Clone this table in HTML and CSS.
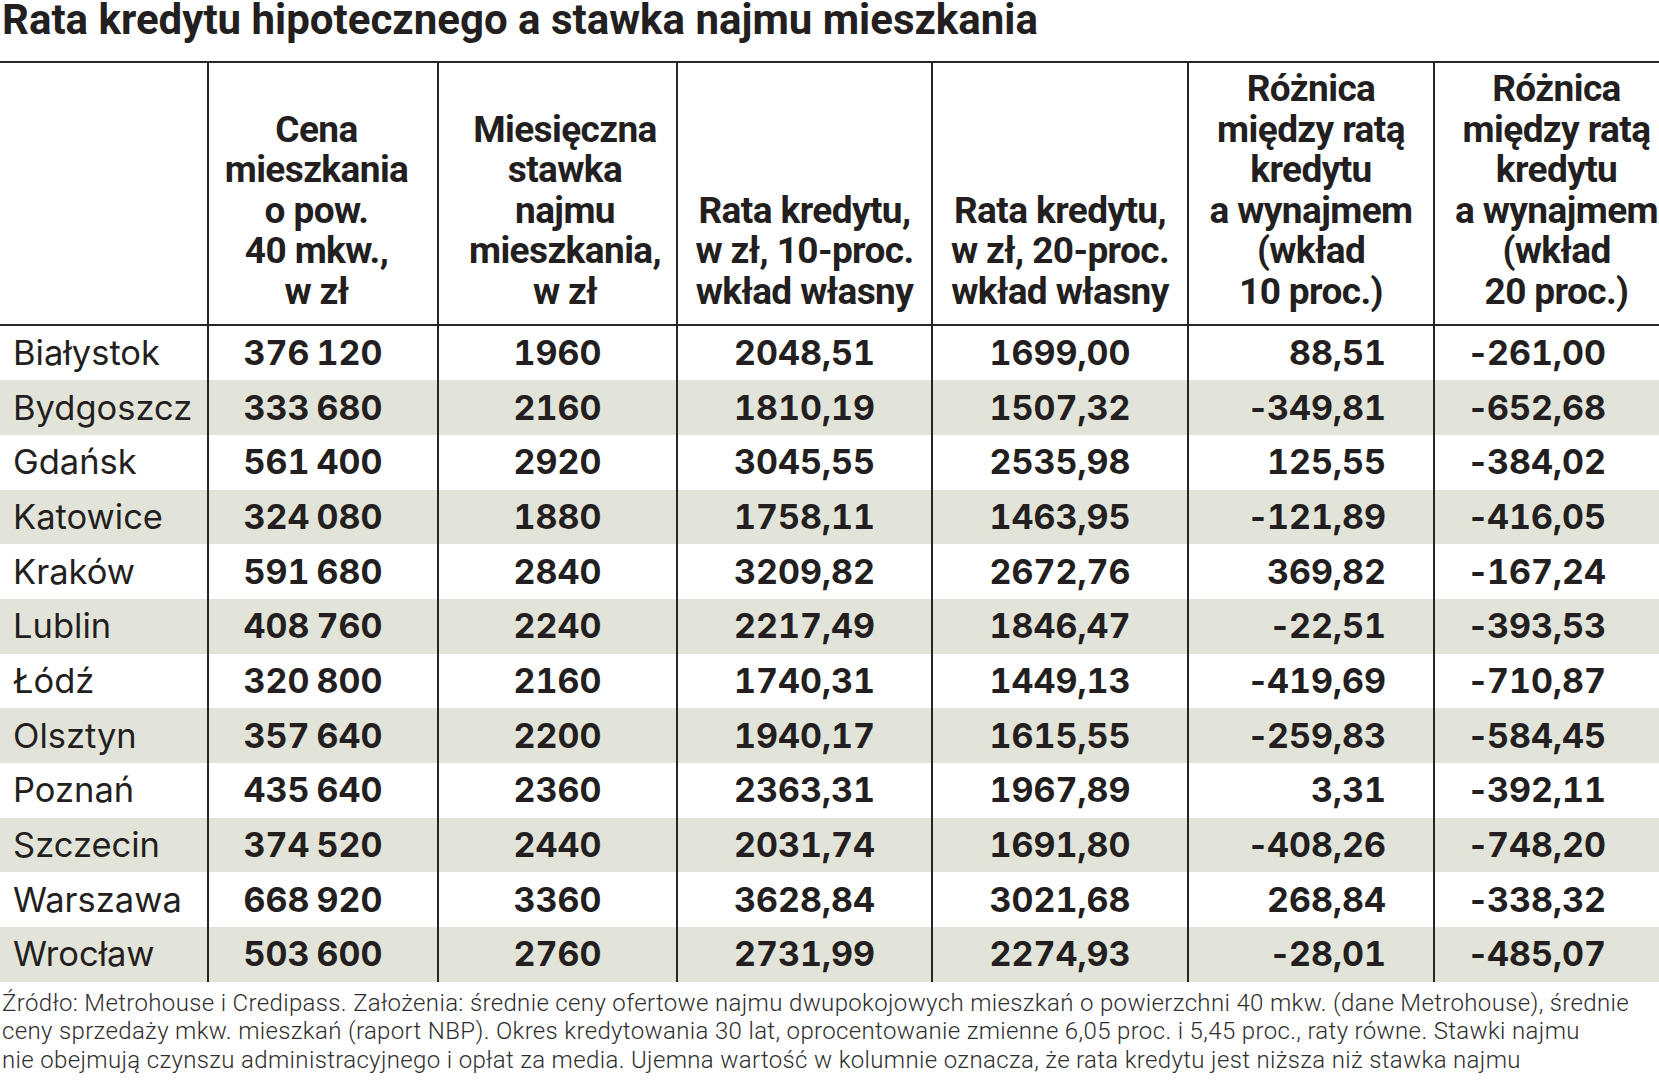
FILE: index.html
```html
<!DOCTYPE html>
<html lang="pl">
<head>
<meta charset="utf-8">
<title>Rata kredytu hipotecznego a stawka najmu mieszkania</title>
<link rel="stylesheet" href="styles.css">
</head>
<body>
<h1 class="title">Rata kredytu hipotecznego a stawka najmu mieszkania</h1>
<table class="grid">
  <colgroup>
    <col class="w-city"><col class="w-price"><col class="w-rent"><col class="w-r10"><col class="w-r20"><col class="w-d10"><col class="w-d20">
  </colgroup>
  <thead>
    <tr>
      <th></th>
      <th class="h-price">Cena<br>mieszkania<br>o pow.<br>40 mkw.,<br>w zł</th>
      <th class="h-rent">Miesięczna<br>stawka<br>najmu<br>mieszkania,<br>w zł</th>
      <th>Rata kredytu,<br>w zł, 10-proc.<br>wkład własny</th>
      <th>Rata kredytu,<br>w zł, 20-proc.<br>wkład własny</th>
      <th>Różnica<br>między ratą<br>kredytu<br>a wynajmem<br>(wkład<br>10 proc.)</th>
      <th class="h-d20">Różnica<br>między ratą<br>kredytu<br>a wynajmem<br>(wkład<br>20 proc.)</th>
    </tr>
  </thead>
  <tbody>
    <tr><td class="city">Białystok</td><td class="price">376 120</td><td>1960</td><td>2048,51</td><td>1699,00</td><td class="diff10">88,51</td><td class="diff20"><span class="minus">-</span>261,00</td></tr>
    <tr><td class="city">Bydgoszcz</td><td class="price">333 680</td><td>2160</td><td>1810,19</td><td>1507,32</td><td class="diff10"><span class="minus">-</span>349,81</td><td class="diff20"><span class="minus">-</span>652,68</td></tr>
    <tr><td class="city">Gdańsk</td><td class="price">561 400</td><td>2920</td><td>3045,55</td><td>2535,98</td><td class="diff10">125,55</td><td class="diff20"><span class="minus">-</span>384,02</td></tr>
    <tr><td class="city">Katowice</td><td class="price">324 080</td><td>1880</td><td>1758,11</td><td>1463,95</td><td class="diff10"><span class="minus">-</span>121,89</td><td class="diff20"><span class="minus">-</span>416,05</td></tr>
    <tr><td class="city">Kraków</td><td class="price">591 680</td><td>2840</td><td>3209,82</td><td>2672,76</td><td class="diff10">369,82</td><td class="diff20"><span class="minus">-</span>167,24</td></tr>
    <tr><td class="city">Lublin</td><td class="price">408 760</td><td>2240</td><td>2217,49</td><td>1846,47</td><td class="diff10"><span class="minus">-</span>22,51</td><td class="diff20"><span class="minus">-</span>393,53</td></tr>
    <tr><td class="city">Łódź</td><td class="price">320 800</td><td>2160</td><td>1740,31</td><td>1449,13</td><td class="diff10"><span class="minus">-</span>419,69</td><td class="diff20"><span class="minus">-</span>710,87</td></tr>
    <tr><td class="city">Olsztyn</td><td class="price">357 640</td><td>2200</td><td>1940,17</td><td>1615,55</td><td class="diff10"><span class="minus">-</span>259,83</td><td class="diff20"><span class="minus">-</span>584,45</td></tr>
    <tr><td class="city">Poznań</td><td class="price">435 640</td><td>2360</td><td>2363,31</td><td>1967,89</td><td class="diff10">3,31</td><td class="diff20"><span class="minus">-</span>392,11</td></tr>
    <tr><td class="city">Szczecin</td><td class="price">374 520</td><td>2440</td><td>2031,74</td><td>1691,80</td><td class="diff10"><span class="minus">-</span>408,26</td><td class="diff20"><span class="minus">-</span>748,20</td></tr>
    <tr><td class="city">Warszawa</td><td class="price">668 920</td><td>3360</td><td>3628,84</td><td>3021,68</td><td class="diff10">268,84</td><td class="diff20"><span class="minus">-</span>338,32</td></tr>
    <tr><td class="city">Wrocław</td><td class="price">503 600</td><td>2760</td><td>2731,99</td><td>2274,93</td><td class="diff10"><span class="minus">-</span>28,01</td><td class="diff20"><span class="minus">-</span>485,07</td></tr>
  </tbody>
</table>
<p class="note">Źródło: Metrohouse i Credipass. Założenia: średnie ceny ofertowe najmu dwupokojowych mieszkań o powierzchni 40 mkw. (dane Metrohouse), średnie<br>ceny sprzedaży mkw. mieszkań (raport NBP). Okres kredytowania 30 lat, oprocentowanie zmienne 6,05 proc. i 5,45 proc., raty równe. Stawki najmu<br>nie obejmują czynszu administracyjnego i opłat za media. Ujemna wartość w kolumnie oznacza, że rata kredytu jest niższa niż stawka najmu</p>
</body>
</html>
```

FILE: styles.css
```css
html, body {
  margin: 0;
  padding: 0;
  background: #ffffff;
  color: #231f20;
}

body {
  width: 1659px;
  overflow: hidden;
}

.title {
  margin: 0;
  padding: 0 0 22px 2px;
  font-family: "Roboto", "Liberation Sans", sans-serif;
  font-weight: 700;
  font-size: 42px;
  line-height: 39px;
  letter-spacing: 0;
  white-space: nowrap;
  color: #231f20;
}

.grid {
  width: 1659px;
  table-layout: fixed;
  border-collapse: separate;
  border-spacing: 0;
  border-top: 2px solid #262626;
}

.w-city { width: 207px; }
.w-price { width: 230px; }
.w-rent { width: 239px; }
.w-r10 { width: 255px; }
.w-r20 { width: 256px; }
.w-d10 { width: 246px; }
.w-d20 { width: 226px; }

.grid th,
.grid td {
  padding: 0;
  border-left: 2px solid #262626;
}

.grid th:first-child,
.grid td:first-child {
  border-left: none;
}

.grid th {
  vertical-align: bottom;
  text-align: center;
  padding: 6px 0 11px;
  border-bottom: 2px solid #262626;
  font-family: "Roboto", "Liberation Sans", sans-serif;
  font-weight: 700;
  font-size: 37px;
  line-height: 40.6px;
  letter-spacing: -0.6px;
  white-space: nowrap;
  overflow: hidden;
}

.grid th.h-price {
  padding-right: 13px;
}

.grid th.h-rent {
  padding-left: 15px;
}

.grid th.h-d20 {
  padding-left: 19px;
}

.grid td {
  height: 54.7px;
  text-align: center;
  vertical-align: middle;
  font-family: "Inter", "DejaVu Sans", sans-serif;
  font-weight: 700;
  font-size: 34px;
  line-height: 54px;
  font-variant-numeric: tabular-nums;
  white-space: nowrap;
}

.grid td .minus {
  font-variant-numeric: normal;
  margin-right: 1px;
}

.grid tbody tr:nth-child(even) td {
  background: #e3e4d9;
}

.grid td.city {
  text-align: left;
  padding-left: 13px;
  font-weight: 400;
  font-size: 34.5px;
}

.grid td.price {
  padding-right: 20px;
  word-spacing: -2px;
}

.grid td.diff10 {
  text-align: right;
  padding-right: 47px;
}

.grid td.diff20 {
  text-align: right;
  padding-right: 53px;
}

.note {
  margin: 7px 0 0 2px;
  font-family: "Roboto", "Liberation Sans", sans-serif;
  font-weight: 300;
  font-size: 24px;
  line-height: 28.5px;
  letter-spacing: 0.35px;
  white-space: nowrap;
  color: #2e2e2e;
}
```
